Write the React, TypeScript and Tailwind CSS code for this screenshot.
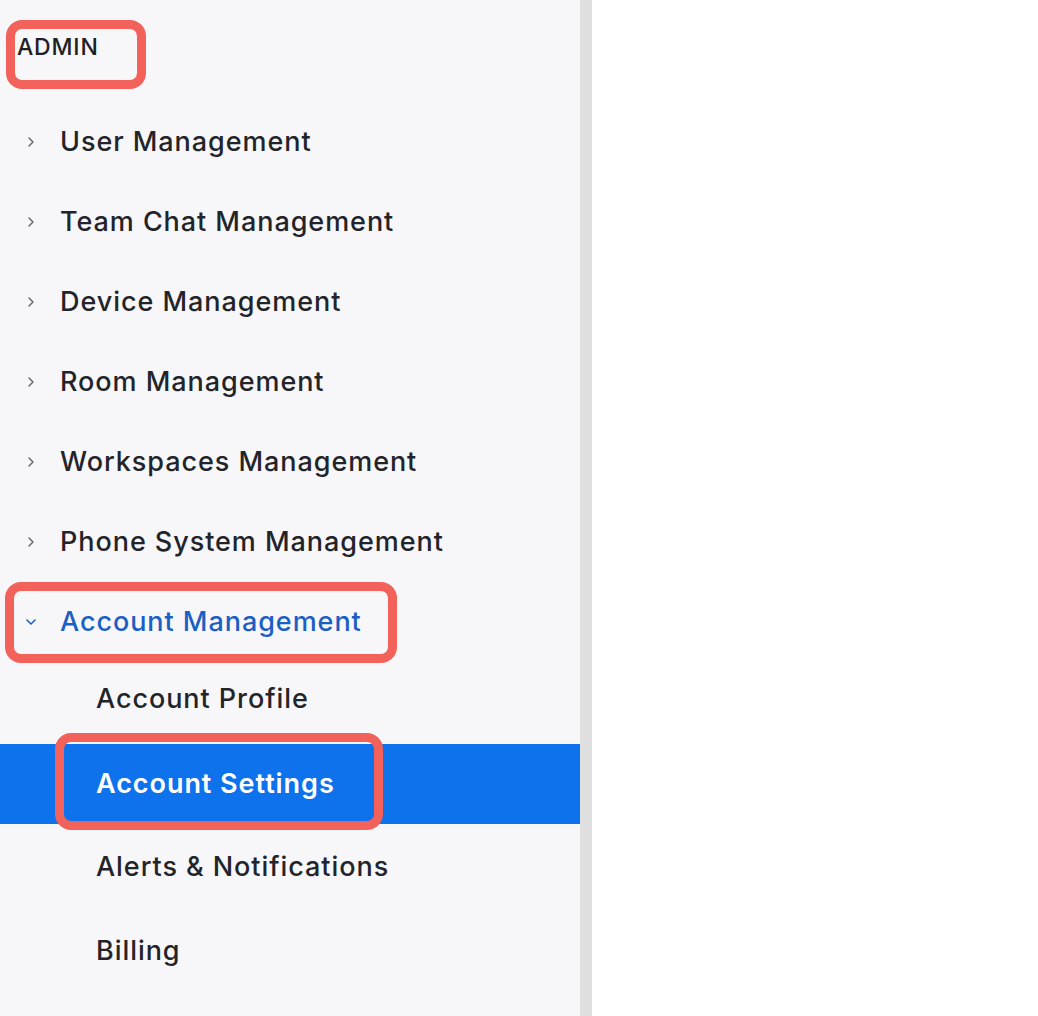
import React from "react";

const mainItems = [
  "User Management",
  "Team Chat Management",
  "Device Management",
  "Room Management",
  "Workspaces Management",
  "Phone System Management",
];

const ChevronRight = () => (
  <svg width="12" height="14" viewBox="0 0 12 14" fill="none" className="shrink-0">
    <path d="M4 3 L8 7 L4 11" stroke="#5f6269" strokeWidth="1.4" strokeLinecap="round" strokeLinejoin="round" />
  </svg>
);

const ChevronDown = () => (
  <svg width="12" height="14" viewBox="0 0 12 14" fill="none" className="shrink-0">
    <path d="M2 5 L6 9 L10 5" stroke="#1b5fc5" strokeWidth="1.6" strokeLinecap="round" strokeLinejoin="round" />
  </svg>
);

const SubItem = ({ label, className }: { label: string; className: string }) => (
  <div className={`flex items-center pl-[96px] ${className}`}>
    <span className="text-[27px] font-medium text-[#23242a] tracking-[0.035em]">{label}</span>
  </div>
);

const App = () => {
  return (
    <div className="flex h-[1016px] w-full bg-white font-['Inter','Liberation_Sans',sans-serif]">
      <div className="w-[580px] h-full bg-[#f7f7f9] flex flex-col">
        <div className="h-[102px] pl-[17px] pt-[32px]">
          <div className="relative inline-block">
            <span className="text-[23px] leading-[30px] font-medium text-[#1f2024] tracking-[0.035em]">ADMIN</span>
            <div className="absolute left-[-11px] top-[-12px] w-[140px] h-[69px] border-[9px] border-[#f2615a] rounded-[16px]" />
          </div>
        </div>

        {mainItems.map((item) => (
          <div key={item} className="h-[80px] flex items-center pl-[25px] gap-[23px]">
            <ChevronRight />
            <span className="text-[27px] font-medium text-[#23242a] tracking-[0.035em]">{item}</span>
          </div>
        ))}

        <div className="h-[80px] flex items-center pl-[25px]">
          <div className="relative flex items-center gap-[23px] h-[40px]">
            <ChevronDown />
            <span className="text-[27px] font-medium text-[#1b5fc5] tracking-[0.035em]">Account Management</span>
            <div className="absolute left-[-20px] top-[-20px] w-[392px] h-[81px] border-[9px] border-[#f2615a] rounded-[16px]" />
          </div>
        </div>

        <SubItem label="Account Profile" className="h-[75px]" />

        <div className="h-[80px] mt-[7px] flex items-center pl-[96px] bg-[#0e72ed]">
          <div className="relative h-[40px] flex items-center">
            <span className="text-[27px] font-semibold text-white tracking-[0.035em]">Account Settings</span>
            <div className="absolute left-[-41px] top-[-31px] w-[328px] h-[97px] border-[9px] border-[#f2615a] rounded-[16px]" />
          </div>
        </div>

        <SubItem label="Alerts & Notifications" className="h-[86px]" />
        <SubItem label="Billing" className="h-[82px]" />
      </div>
      <div className="w-[12px] h-full bg-[#dfdfdf]" />
      <div className="flex-1 h-full bg-white" />
    </div>
  );
};

export default App;
